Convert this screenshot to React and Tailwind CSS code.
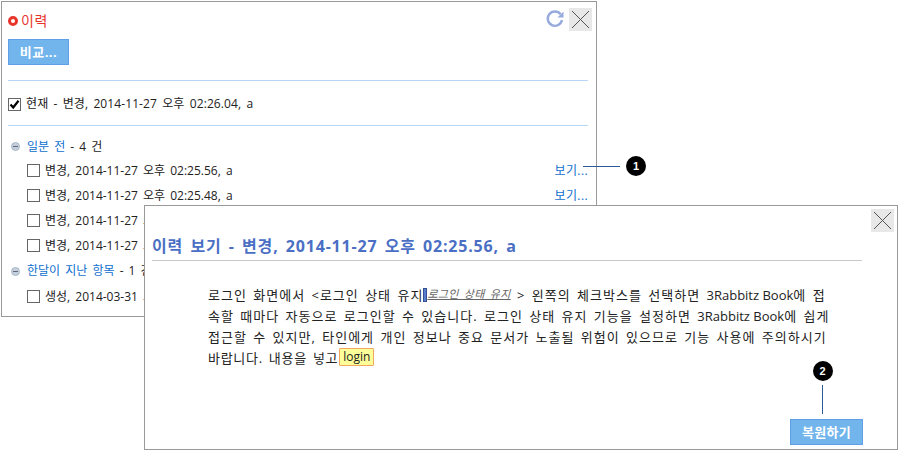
const FONT = "font-['Open_Sans','Noto_Sans_CJK_KR',sans-serif]";

function CloseBox() {
  return (
    <div className="w-[23px] h-[23px] bg-[#e8e8e8] flex items-center justify-center">
      <svg width="19" height="19" viewBox="0 0 19 19" shapeRendering="crispEdges">
        <path d="M1 1 L18 18 M18 1 L1 18" stroke="#555" strokeWidth="1" fill="none" />
      </svg>
    </div>
  );
}

function Refresh() {
  return (
    <svg width="20" height="20" viewBox="0 0 20 20">
      <path d="M15.6 5.2 A7.2 7.2 0 1 0 17 11" stroke="#96aadc" strokeWidth="2.4" fill="none" />
      <path d="M18.5 2.5 V8.5 H12.5 Z" fill="#96aadc" />
    </svg>
  );
}

function Box({ checked }) {
  return (
    <div className="w-[13px] h-[13px] border border-[#666] bg-white shrink-0 flex items-center justify-center">
      {checked && (
        <svg width="11" height="11" viewBox="0 0 11 11">
          <path d="M1.5 5.5 L4.2 8.5 L9.5 1.8" stroke="#000" strokeWidth="2.2" fill="none" />
        </svg>
      )}
    </div>
  );
}

function Minus() {
  return (
    <div className="w-[9px] h-[9px] rounded-full bg-[#c3cfdc] border border-[#aab8c8] flex items-center justify-center shrink-0">
      <div className="w-[5px] h-px bg-[#667]" />
    </div>
  );
}

function Badge({ n }) {
  return (
    <div className="w-5 h-5 rounded-full bg-black text-white text-[11px] font-bold flex items-center justify-center font-['Liberation_Sans',sans-serif]">
      {n}
    </div>
  );
}

function Row({ text, link }) {
  return (
    <div className="h-[25px] flex items-center pl-[19px] gap-[5px] whitespace-nowrap">
      <Box />
      <span>{text}</span>
      {link && <span className="ml-auto text-[#0f6fcf] tracking-[0.4px]">보기...</span>}
    </div>
  );
}

const LINE = "whitespace-nowrap [text-align-last:justify]";
const Latin = ({ children }) => <span className="tracking-normal [word-spacing:0px]">{children}</span>;

export default function App() {
  return (
    <div className={`relative w-[898px] h-[450px] bg-white overflow-hidden text-[12px] leading-[16px] text-[#222] [word-spacing:2px] ${FONT}`}>
      {/* history window */}
      <div className="absolute left-[1px] top-[1px] w-[596px] h-[316px] border border-[#999] bg-white px-[6px] flex flex-col">
        <div className="h-[36px] flex items-center justify-between pt-[2px]">
          <div className="flex items-center gap-[3px] text-[14px] text-[#e8352b] tracking-[0.5px]">
            <div className="w-[10px] h-[10px] rounded-full border-[3px] border-[#e8352b]" />
            <span>이력</span>
          </div>
          <div className="flex items-center gap-[4px] -mr-[2px] mt-[-4px]">
            <Refresh />
            <CloseBox />
          </div>
        </div>
        <div className="mt-[1px]">
          <div className="w-[61px] h-[26px] bg-[#71b5ec] border border-[#5f9fe6] text-white font-bold text-[13px] flex items-center justify-center tracking-[0.5px]">
            비교...
          </div>
        </div>
        <div className="h-px bg-[#b8d6f5] mt-[15px] w-[580px]" />
        <div className="h-[44px] pt-[2px] flex items-center gap-[5px] whitespace-nowrap w-[580px]">
          <Box checked />
          <span className="tracking-[0.1px]">현재 - 변경, 2014-11-27 오후 02:26.04, a</span>
        </div>
        <div className="h-px bg-[#b8d6f5] w-[580px]" />
        <div className="w-[580px] mt-[9px]">
          <div className="h-[23px] flex items-center gap-[7px] pl-[3px] whitespace-nowrap">
            <Minus />
            <span><span className="text-[#0f6fcf]">일분 전</span> - 4 건</span>
          </div>
          <Row text="변경, 2014-11-27 오후 02:25.56, a" link />
          <Row text="변경, 2014-11-27 오후 02:25.48, a" link />
          <Row text="변경, 2014-11-27 오후 02:25.40, a" />
          <Row text="변경, 2014-11-27 오후 02:25.32, a" />
          <div className="h-[26px] flex items-center gap-[7px] pl-[3px] whitespace-nowrap">
            <Minus />
            <span><span className="text-[#0f6fcf]">한달이 지난 항목</span> - 1 건</span>
          </div>
          <Row text="생성, 2014-03-31 오후 02:25.00, a" />
        </div>
      </div>

      {/* callout 1 */}
      <div className="absolute left-[583px] top-[156px] flex items-center">
        <div className="w-[37px] h-px bg-[#2c5a96]" />
        <div className="ml-[6px]"><Badge n="1" /></div>
      </div>

      {/* view window */}
      <div className="absolute left-[144px] top-[205px] w-[754px] h-[245px] border border-[#999] bg-white flex flex-col">
        <div className="flex justify-end pt-[3px] pr-[3px]">
          <CloseBox />
        </div>
        <div className="mx-[7px] w-[710px] h-[29px] pt-[2px] border-b border-[#c8c8c8] text-[16px] leading-[24px] font-bold text-[#4a6fc4] whitespace-nowrap tracking-[0.8px] [word-spacing:2.4px]">
          이력 보기 - 변경, 2014-11-27 오후 02:25.56, a
        </div>
        <div className="ml-[63px] w-[613px] h-[78px] mt-[22px] text-[13px] leading-[21px] text-justify text-[#222] tracking-[1px]">
          <div className={LINE}>
            로그인 화면에서 &lt;로그인 상태 유지<span className="inline-block w-[4px] h-[14px] bg-[#5b7fd0] align-[-2px] border border-[#34508f]" /><span className="italic underline text-[#666] text-[11px] tracking-[0.3px] align-[2px]">로그인 상태 유지</span> &gt; 왼쪽의 체크박스를 선택하면 <Latin>3Rabbitz Book</Latin>에 접
          </div>
          <div className={LINE}>
            속할 때마다 자동으로 로그인할 수 있습니다. 로그인 상태 유지 기능을 설정하면 <Latin>3Rabbitz Book</Latin>에 쉽게
          </div>
          <div className={LINE}>
            접근할 수 있지만, 타인에게 개인 정보나 중요 문서가 노출될 위험이 있으므로 기능 사용에 주의하시기
          </div>
          <div className="whitespace-nowrap tracking-[0.7px]">
            바랍니다. 내용을 넣고<span className="inline-block ml-[1px] px-[3px] h-[18px] text-[12px] tracking-normal leading-[16px] bg-[#ffff99] border border-[#f0a860] rounded-[1px] align-[2px]">login</span>
          </div>
        </div>
        <div className="flex-1" />
        <div className="flex flex-col items-end pr-[34px] pb-[4px]">
          <div className="flex flex-col items-center w-[73px] mb-[5px] pr-[8px]">
            <Badge n="2" />
            <div className="w-px h-[29px] bg-[#2c5a96] mt-[4px]" />
          </div>
          <div className="w-[73px] h-[26px] bg-[#71b5ec] border border-[#5f9fe6] text-white font-bold text-[13px] flex items-center justify-center tracking-[0.3px]">
            복원하기
          </div>
        </div>
      </div>
    </div>
  );
}
